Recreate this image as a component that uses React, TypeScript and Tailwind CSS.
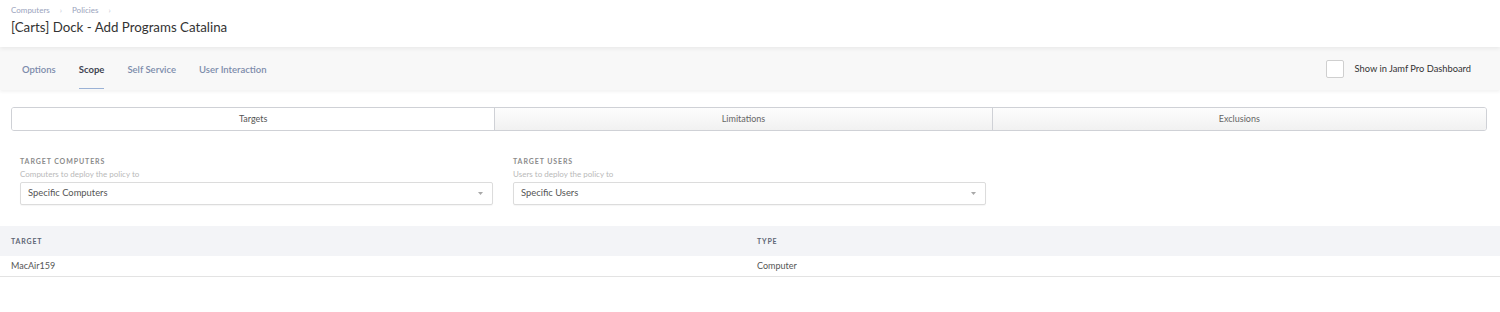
const font = { fontFamily: "Lato, 'Open Sans', Arial, sans-serif" };

function Caret() {
  return (
    <svg width="5" height="3" viewBox="0 0 5 3" className="fill-[#a8a8a8]">
      <path d="M0 0h5L2.5 3z" />
    </svg>
  );
}

function Field({ label, hint, value }: { label: string; hint: string; value: string }) {
  return (
    <div className="w-[473px]">
      <div className="text-[7px] font-bold tracking-[0.13em] text-[#8b8b8b] leading-[10px]">{label}</div>
      <div className="mt-[3px] text-[8px] text-[#b9b9b9] leading-[10px]">{hint}</div>
      <div className="mt-[3px] h-[23px] rounded-[2px] border border-[#dcdcdc] bg-white flex items-center justify-between pl-[7px] pr-[9px] shadow-[0_1px_1px_rgba(0,0,0,0.04)]">
        <span className="text-[9.4px] text-[#555]">{value}</span>
        <Caret />
      </div>
    </div>
  );
}

export default function App() {
  const tabs = ["Options", "Scope", "Self Service", "User Interaction"];
  return (
    <div style={font} className="w-[1500px] h-[312px] bg-white overflow-hidden">
      <div className="h-[47px] px-[11px] pt-[5px] relative z-10 shadow-[0_2px_4px_rgba(0,0,0,0.06)]">
        <div className="flex items-center gap-[10px] text-[8px] text-[#9aa3bc] leading-[10px]">
          <span>Computers</span>
          <span className="text-[#c4c9d6]">›</span>
          <span>Policies</span>
          <span className="text-[#c4c9d6]">›</span>
        </div>
        <div className="mt-[4px] text-[13.3px] text-[#333] leading-[16px]">[Carts] Dock - Add Programs Catalina</div>
      </div>

      <div className="h-[43px] bg-[#f8f8f8] flex items-stretch justify-between pl-[22px] pr-[29px] shadow-[0_2px_3px_rgba(0,0,0,0.05)] relative">
        <div className="flex gap-[23px]">
          {tabs.map((t) => (
            <div key={t} className="relative flex items-center pt-[4px]">
              <span className={t === "Scope" ? "text-[9.5px] font-bold text-[#3f4552]" : "text-[9.5px] font-semibold text-[#7d8cab]"}>{t}</span>
              {t === "Scope" && <div className="absolute left-0 right-0 bottom-[1px] h-[1.5px] bg-[#9bb2d6]" />}
            </div>
          ))}
        </div>
        <div className="flex items-center gap-[11px] pt-[1px]">
          <div className="w-[18px] h-[18px] rounded-[2px] border border-[#cfcfcf] bg-white" />
          <span className="text-[9.3px] text-[#333]">Show in Jamf Pro Dashboard</span>
        </div>
      </div>

      <div className="pt-[17px] pl-[11px] pr-[13px]">
        <div className="grid grid-cols-[483fr_498fr_495fr] h-[24px] rounded-[3px] border border-[#cfd1d6] overflow-hidden">
          <div className="bg-white flex items-center justify-center text-[9px] text-[#555]">Targets</div>
          <div className="border-l border-[#cfd1d6] bg-gradient-to-b from-[#fdfdfd] to-[#f1f1f1] flex items-center justify-center text-[9px] text-[#666]">Limitations</div>
          <div className="border-l border-[#cfd1d6] bg-gradient-to-b from-[#fdfdfd] to-[#f1f1f1] flex items-center justify-center text-[9px] text-[#666]">Exclusions</div>
        </div>
      </div>

      <div className="flex gap-[20px] pl-[20px] pt-[25px]">
        <Field label="TARGET COMPUTERS" hint="Computers to deploy the policy to" value="Specific Computers" />
        <Field label="TARGET USERS" hint="Users to deploy the policy to" value="Specific Users" />
      </div>

      <div className="mt-[21px]">
        <div className="grid grid-cols-[746px_1fr] h-[30px] bg-[#f3f4f7] items-center text-[7px] font-bold tracking-[0.12em] text-[#5d6474]">
          <div className="px-[11px]">TARGET</div>
          <div className="px-[11px]">TYPE</div>
        </div>
        <div className="grid grid-cols-[746px_1fr] h-[21px] items-center border-b border-[#e3e3e3] text-[9px] text-[#555]">
          <div className="px-[11px]">MacAir159</div>
          <div className="px-[11px]">Computer</div>
        </div>
      </div>
    </div>
  );
}
